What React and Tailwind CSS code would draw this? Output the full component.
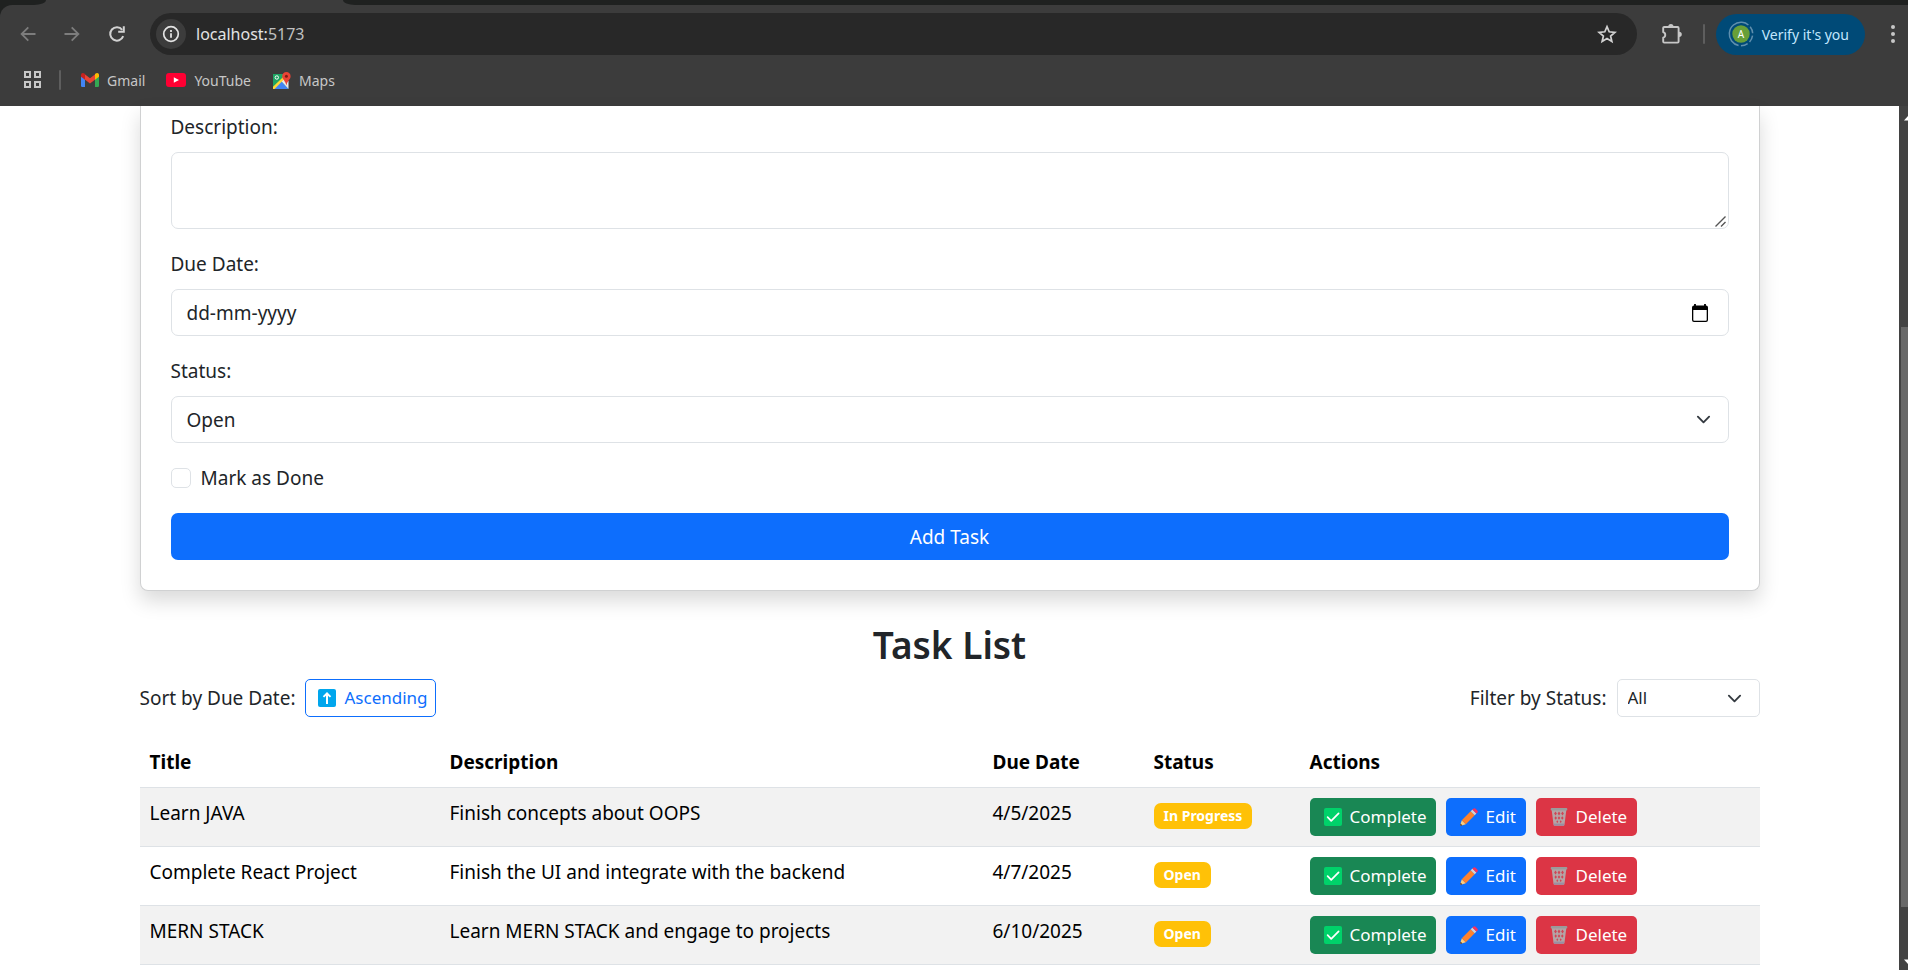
import React from "react";

const tasks = [
  { title: "Learn JAVA", description: "Finish concepts about OOPS", due: "4/5/2025", status: "In Progress" },
  { title: "Complete React Project", description: "Finish the UI and integrate with the backend", due: "4/7/2025", status: "Open" },
  { title: "MERN STACK", description: "Learn MERN STACK and engage to projects", due: "6/10/2025", status: "Open" },
];

/* ---------- browser icons ---------- */

const Back = ({ flip }) => (
  <svg width="16" height="16" viewBox="0 0 16 16" fill="none" stroke="#7d7d7d" strokeWidth="1.8" className={flip ? "rotate-180" : ""}>
    <path d="M15.5 8H1.8M8.3 1.3L1.6 8l6.7 6.7" />
  </svg>
);

const Reload = () => (
  <svg width="18" height="18" viewBox="0 0 18 18" fill="none" stroke="#d2d2d2" strokeWidth="2">
    <path d="M15.2 11.2A6.7 6.7 0 1 1 14.2 4.8" />
    <path d="M15.8 1.2v5.6h-5.6" />
  </svg>
);

const Info = () => (
  <svg width="18" height="18" viewBox="0 0 18 18" fill="none">
    <circle cx="9" cy="9" r="7.3" stroke="#e3e3e3" strokeWidth="1.7" />
    <path d="M9 8.2v4.6M9 5v1.9" stroke="#e3e3e3" strokeWidth="1.8" />
  </svg>
);

const Star = () => (
  <svg width="20" height="20" viewBox="0 0 20 20" fill="none" stroke="#d2d2d2" strokeWidth="1.7">
    <path d="M10 2.600l2.200 5.200 5.700.5-4.300 3.700 1.300 5.500L10 14.600l-4.900 2.900 1.300-5.500L2.100 8.300l5.700-.5z" />
  </svg>
);

const Puzzle = () => (
  <svg width="22" height="22" viewBox="0 0 22 22">
    <path
      d="M3.200 4h13.400a1 1 0 0 1 1 1v13.600a1 1 0 0 1-1 1H3.200a1 1 0 0 1-1-1v-4a2.800 2.800 0 0 0 0-5.400V5a1 1 0 0 1 1-1z"
      fill="none" stroke="#c7c7c7" strokeWidth="1.9" strokeLinejoin="round"
    />
    <path d="M7.300 3.800a2.600 2.800 0 0 1 5.200 0zM18 8.700a2.800 2.600 0 0 1 0 5.200z" fill="#c7c7c7" />
  </svg>
);

const Apps = () => (
  <svg width="20" height="20" viewBox="0 0 20 20" fill="none" stroke="#c7c7c7" strokeWidth="2">
    <path d="M2 2h5v5H2zM12 2h5v5h-5zM2 12h5v5H2zM12 12h5v5h-5z" />
  </svg>
);

const Gmail = () => (
  <svg width="18" height="14" viewBox="0 0 18 14">
    <path d="M0 3.200h4V14H1.200A1.200 1.200 0 0 1 0 12.800z" fill="#4285f4" />
    <path d="M14 3.200h4v9.600A1.200 1.200 0 0 1 16.800 14H14z" fill="#34a853" />
    <path d="M3.800 1.200L9 5.200l5.200-4v5.300L9 10.400 3.800 6.500z" fill="#ea4335" />
    <path d="M0 2C0 .2 1.900-.6 3.300.5l.7.6v5.600L0 3.700z" fill="#c5221f" />
    <path d="M18 2c0-1.800-1.900-2.600-3.300-1.500l-.7.6v5.600l4-3z" fill="#fbbc04" />
  </svg>
);

const YouTube = () => (
  <svg width="20" height="14" viewBox="0 0 20 14">
    <rect width="20" height="14" rx="3" fill="#ff0033" />
    <path d="M7.800 4.200v5.600L13 7z" fill="#fff" />
  </svg>
);

const Maps = () => (
  <svg width="19" height="19" viewBox="0 0 19 19">
    <path d="M1 3h15v15H1z" fill="#1fa463" />
    <path d="M1 17.500L9 9.800l7.500 8.200H1z" fill="#4285f4" />
    <path d="M9 9.800l3.500-3.400 4 4V18z" fill="#e8eaed" />
    <path d="M1 15.800L12.200 5l1.600 1.600L2.600 18H1z" fill="#fdd835" />
    <circle cx="4.800" cy="6.500" r="1.700" fill="none" stroke="#fff" strokeWidth="1" />
    <path d="M14.400 1a4.200 4.200 0 0 1 4.200 4.200c0 3.200-3.400 4.600-4.200 9.400-.8-4.800-4.200-6.200-4.200-9.400A4.200 4.200 0 0 1 14.400 1z" fill="#ea4335" />
    <circle cx="14.400" cy="5.200" r="1.500" fill="#7f1d14" />
  </svg>
);

/* ---------- page icons ---------- */

const Calendar = () => (
  <svg width="18" height="20" viewBox="0 0 18 20">
    <path d="M3 2.500h12a2 2 0 0 1 2 2V17a2 2 0 0 1-2 2H3a2 2 0 0 1-2-2V4.500a2 2 0 0 1 2-2zM2.300 7v10c0 .4.300.8.800.8h11.800c.5 0 .8-.4.8-.8V7z" fill="#000" fillRule="evenodd" />
    <path d="M4 1v3M14 1v3" stroke="#000" strokeWidth="1.800" />
  </svg>
);

const Chevron = () => (
  <svg width="15" height="15" viewBox="0 0 16 16" fill="none" stroke="#343a40" strokeWidth="2" strokeLinecap="round" strokeLinejoin="round">
    <path d="m2 5 6 6 6-6" />
  </svg>
);

const Grip = () => (
  <svg width="11" height="11" viewBox="0 0 11 11" fill="none" stroke="#555" strokeWidth="1.400">
    <path d="M.5 10.500l10-10M6 10.500L10.500 6" />
  </svg>
);

const UpArrow = () => (
  <svg width="18" height="18" viewBox="0 0 18 18">
    <rect width="18" height="18" rx="2" fill="#00a6ed" />
    <path d="M9 3l4.200 4.200-1.300 1.300L10 6.700V15H8V6.700L6.100 8.500 4.800 7.200z" fill="#fff" />
  </svg>
);

const Check = () => (
  <svg width="18" height="18" viewBox="0 0 18 18">
    <rect width="18" height="18" rx="2" fill="#00d26a" />
    <path d="M3.600 9.200l3.600 3.700 7.400-7.600" fill="none" stroke="#fff" strokeWidth="1.700" strokeLinecap="round" strokeLinejoin="round" />
  </svg>
);

const Pencil = () => (
  <svg width="18" height="18" viewBox="0 0 18 18">
    <path d="M1.800 12.200l4 4L.9 17.800c-.5.100-.8-.2-.7-.7z" fill="#ffce7c" />
    <path d="M.6 15.600l1.800 1.800-1.500.4c-.5.100-.8-.2-.7-.7z" fill="#402a32" />
    <path d="M1.800 12.200l8.900-8.900 4 4-8.900 8.900z" fill="#ff822d" />
    <path d="M10.700 3.300l1.700-1.700 4 4-1.700 1.700z" fill="#d3d3d3" />
    <path d="M12.400 1.600l.9-.9c.7-.7 1.600-.7 2.300 0l1.700 1.700c.7.700.7 1.600 0 2.300l-.9.900z" fill="#f92f60" />
  </svg>
);

const Trash = () => (
  <svg width="18" height="18" viewBox="0 0 18 18">
    <path d="M1.700 2h14.600l-1.800 14.700c-.1.700-.6 1.100-1.300 1.100H4.800c-.7 0-1.200-.4-1.300-1.100z" fill="#b4a4a6" />
    <path d="M5.500 3.600l1.400 1.900-1.400 1.900-1.400-1.900zM9 3.600l1.400 1.900L9 7.400 7.600 5.500zM12.500 3.600l1.400 1.900-1.400 1.900-1.400-1.900zM5.700 8.200l1.300 1.800-1.300 1.800L4.400 10zM9 8.200l1.300 1.800L9 11.800 7.700 10zM12.300 8.200l1.300 1.800-1.300 1.800L11 10zM7.300 12.300l1 1.400-1 1.400-1-1.400zM10.700 12.300l1 1.400-1 1.400-1-1.400z" fill="#cf4655" />
    <rect x=".7" y="0" width="16.600" height="2.600" rx="1" fill="#9b9b9b" />
    <rect x="4" y="15.600" width="10" height="2" fill="#998ea4" />
  </svg>
);

function Bookmark({ icon, label }) {
  return (
    <a href="#" className="flex items-center gap-2">
      {icon}
      <span>{label}</span>
    </a>
  );
}

function BrowserBar() {
  return (
    <header className="bg-[#1f2120] font-['Noto_Sans','Open_Sans',sans-serif]">
      <div className="flex h-[5px] bg-[#3c3c3c]">
        <div className="w-[46px] bg-[#1f2120] [border-bottom-right-radius:12px_5px]" />
        <div className="w-[297px]" />
        <div className="flex-1 bg-[#1f2120] [border-bottom-left-radius:12px_5px]" />
      </div>
      <div className="rounded-tl-xl bg-[#3c3c3c] pt-2 pb-[11px]">
        <div className="flex items-center">
          <div className="flex w-[150px] shrink-0 items-center gap-7 pl-5">
            <button aria-label="Back"><Back /></button>
            <button aria-label="Forward"><Back flip /></button>
            <button aria-label="Reload"><Reload /></button>
          </div>
          <div className="flex h-[42px] flex-1 items-center rounded-full bg-[#282828] pr-5 pl-1.5">
            <button aria-label="Site information" className="flex size-[30px] items-center justify-center rounded-full bg-[#3c3c3c]"><Info /></button>
            <div className="flex-1 pl-2.5 text-[16px] leading-6 text-[#e3e3e3]">
              localhost:<span className="text-[#c0c0c0]">5173</span>
            </div>
            <button aria-label="Bookmark this tab"><Star /></button>
          </div>
          <button aria-label="Extensions" className="ml-6"><Puzzle /></button>
          <div className="ml-5 h-5 w-0.5 rounded-full bg-[#5e5e5e]" />
          <button className="ml-[11px] flex h-[41px] items-center gap-2 rounded-full bg-[#004a77] pr-4 pl-3 text-[14px] text-[#c2e7ff]">
            <svg width="26" height="26" viewBox="0 0 26 26">
              <circle cx="13" cy="13" r="11.700" fill="none" stroke="#5f8fae" strokeWidth="1.500" strokeDasharray="7 2.500 7 2.500 7 2.500 7 2.500 35 0.500" transform="rotate(-85 13 13)" />
              <circle cx="13" cy="13" r="8.700" fill="#689f38" />
              <text x="13" y="16.500" textAnchor="middle" fontSize="10" fill="#fff">A</text>
            </svg>
            Verify it's you
          </button>
          <button aria-label="Menu" className="mr-3 ml-[25px]">
            <svg width="6" height="20" viewBox="0 0 6 20" fill="#c7c7c7">
              <circle cx="3" cy="3" r="2" /><circle cx="3" cy="10" r="2" /><circle cx="3" cy="17" r="2" />
            </svg>
          </button>
        </div>
        <nav className="mt-2.5 flex h-[30px] items-center pl-[23px] text-[14px] text-[#c7c7c7]">
          <button aria-label="Apps"><Apps /></button>
          <div className="mr-5 ml-4 h-5 w-0.5 rounded-full bg-[#5e5e5e]" />
          <div className="flex items-center gap-[21px]">
            <Bookmark icon={<Gmail />} label="Gmail" />
            <Bookmark icon={<YouTube />} label="YouTube" />
            <Bookmark icon={<Maps />} label="Maps" />
          </div>
        </nav>
      </div>
    </header>
  );
}

function TaskForm() {
  return (
    <form className="rounded-b-lg border border-t-0 border-[#d0d1d2] bg-white px-[30px] pt-1.5 pb-[30px] shadow-[0_10px_20px_rgba(0,0,0,0.15)]">
      <label htmlFor="description" className="mb-2.5 block">Description:</label>
      <div className="relative mb-5">
        <textarea id="description" className="block h-[77px] w-full resize-none rounded-[7px] border border-[#dee2e6] px-[15px] py-[7px]" />
        <span className="pointer-events-none absolute right-[3px] bottom-0.5"><Grip /></span>
      </div>

      <label htmlFor="due" className="mb-2.5 block">Due Date:</label>
      <div className="mb-5 flex h-[47px] items-center rounded-[7px] border border-[#dee2e6] pr-[19px] pl-[15px]">
        <input id="due" type="text" placeholder="dd-mm-yyyy" className="min-w-0 flex-1 outline-none placeholder:text-[#212529]" />
        <button type="button" aria-label="Open calendar"><Calendar /></button>
      </div>

      <label htmlFor="status" className="mb-2.5 block">Status:</label>
      <div className="relative mb-5">
        <select id="status" className="block h-[47px] w-full appearance-none rounded-[7px] border border-[#dee2e6] bg-white px-[15px]">
          <option>Open</option>
          <option>In Progress</option>
        </select>
        <span className="pointer-events-none absolute inset-y-0 right-[18px] flex items-center"><Chevron /></span>
      </div>

      <label className="mb-5 flex items-center gap-2.5">
        <input type="checkbox" className="size-5 appearance-none rounded-[5px] border border-[#dee2e6]" />
        Mark as Done
      </label>
      <button type="button" className="h-[47px] w-full rounded-[7px] bg-[#0d6efd] text-white">Add Task</button>
    </form>
  );
}

function ActionButton({ icon, label, className }) {
  return (
    <button className={"flex h-[38px] items-center gap-2 rounded-[5px] pl-3.5 text-[17px] text-white " + className}>
      {icon}
      {label}
    </button>
  );
}

function TaskTable() {
  return (
    <table className="mt-5 w-full table-fixed border-collapse text-left text-black">
      <colgroup>
        <col className="w-[300px]" />
        <col className="w-[543px]" />
        <col className="w-[161px]" />
        <col className="w-[156px]" />
        <col />
      </colgroup>
      <thead>
        <tr className="border-b border-[#dee2e6]">
          {["Title", "Description", "Due Date", "Status", "Actions"].map((h) => (
            <th key={h} className="p-2.5 font-bold">{h}</th>
          ))}
        </tr>
      </thead>
      <tbody>
        {tasks.map((t) => (
          <tr key={t.title} className="border-b border-[#dee2e6] align-top odd:bg-[#f2f2f2]">
            <td className="p-2.5">{t.title}</td>
            <td className="p-2.5">{t.description}</td>
            <td className="p-2.5">{t.due}</td>
            <td className="p-2.5">
              <span className="mt-[5px] inline-block rounded-[7px] bg-[#ffc107] px-2.5 text-[14px] leading-[26px] font-bold text-white align-top">{t.status}</span>
            </td>
            <td className="p-2.5">
              <div className="flex gap-2.5">
                <ActionButton icon={<Check />} label="Complete" className="w-[126px] bg-[#198754]" />
                <ActionButton icon={<Pencil />} label="Edit" className="w-20 bg-[#0d6efd]" />
                <ActionButton icon={<Trash />} label="Delete" className="w-[101px] bg-[#dc3545]" />
              </div>
            </td>
          </tr>
        ))}
      </tbody>
    </table>
  );
}

export default function App() {
  return (
    <div className="flex min-h-screen flex-col bg-white">
      <BrowserBar />
      <div className="flex flex-1">
        <main className="min-w-0 flex-1 font-['Noto_Sans','Open_Sans',sans-serif] text-[19px] leading-[30px] text-[#212529]">
          <div className="mx-auto max-w-[1620px]">
            <TaskForm />
            <h2 className="mt-[30px] mb-2.5 text-center text-[37px] leading-[48px] font-semibold">Task List</h2>
            <div className="flex items-start justify-between">
              <div className="flex items-center gap-2.5">
                <span>Sort by Due Date:</span>
                <button className="flex h-[38px] w-[131px] items-center gap-2 rounded-[5px] border border-[#0d6efd] pl-3 text-[17px] text-[#0d6efd]">
                  <UpArrow />
                  Ascending
                </button>
              </div>
              <div className="flex items-center gap-2.5">
                <label htmlFor="filter">Filter by Status:</label>
                <div className="relative">
                  <select id="filter" className="block h-[38px] w-[143px] appearance-none rounded-[5px] border border-[#dee2e6] bg-white px-2.5 text-[17px]">
                    <option>All</option>
                    <option>Open</option>
                    <option>In Progress</option>
                  </select>
                  <span className="pointer-events-none absolute inset-y-0 right-[18px] flex items-center"><Chevron /></span>
                </div>
              </div>
            </div>
            <TaskTable />
          </div>
        </main>
        <div aria-hidden="true" className="flex w-[9px] flex-col overflow-hidden bg-[#424242] pl-0.5">
          <svg width="14" height="8" viewBox="0 0 14 8" className="mt-2 shrink-0"><path d="M3 6.500h8L7 2z" fill="#fff" /></svg>
          <div className="mt-[205px] h-[580px] bg-[#686868]" />
          <svg width="14" height="8" viewBox="0 0 14 8" className="mt-auto mb-1 shrink-0"><path d="M3 1.500h8L7 6z" fill="#fff" /></svg>
        </div>
      </div>
    </div>
  );
}
